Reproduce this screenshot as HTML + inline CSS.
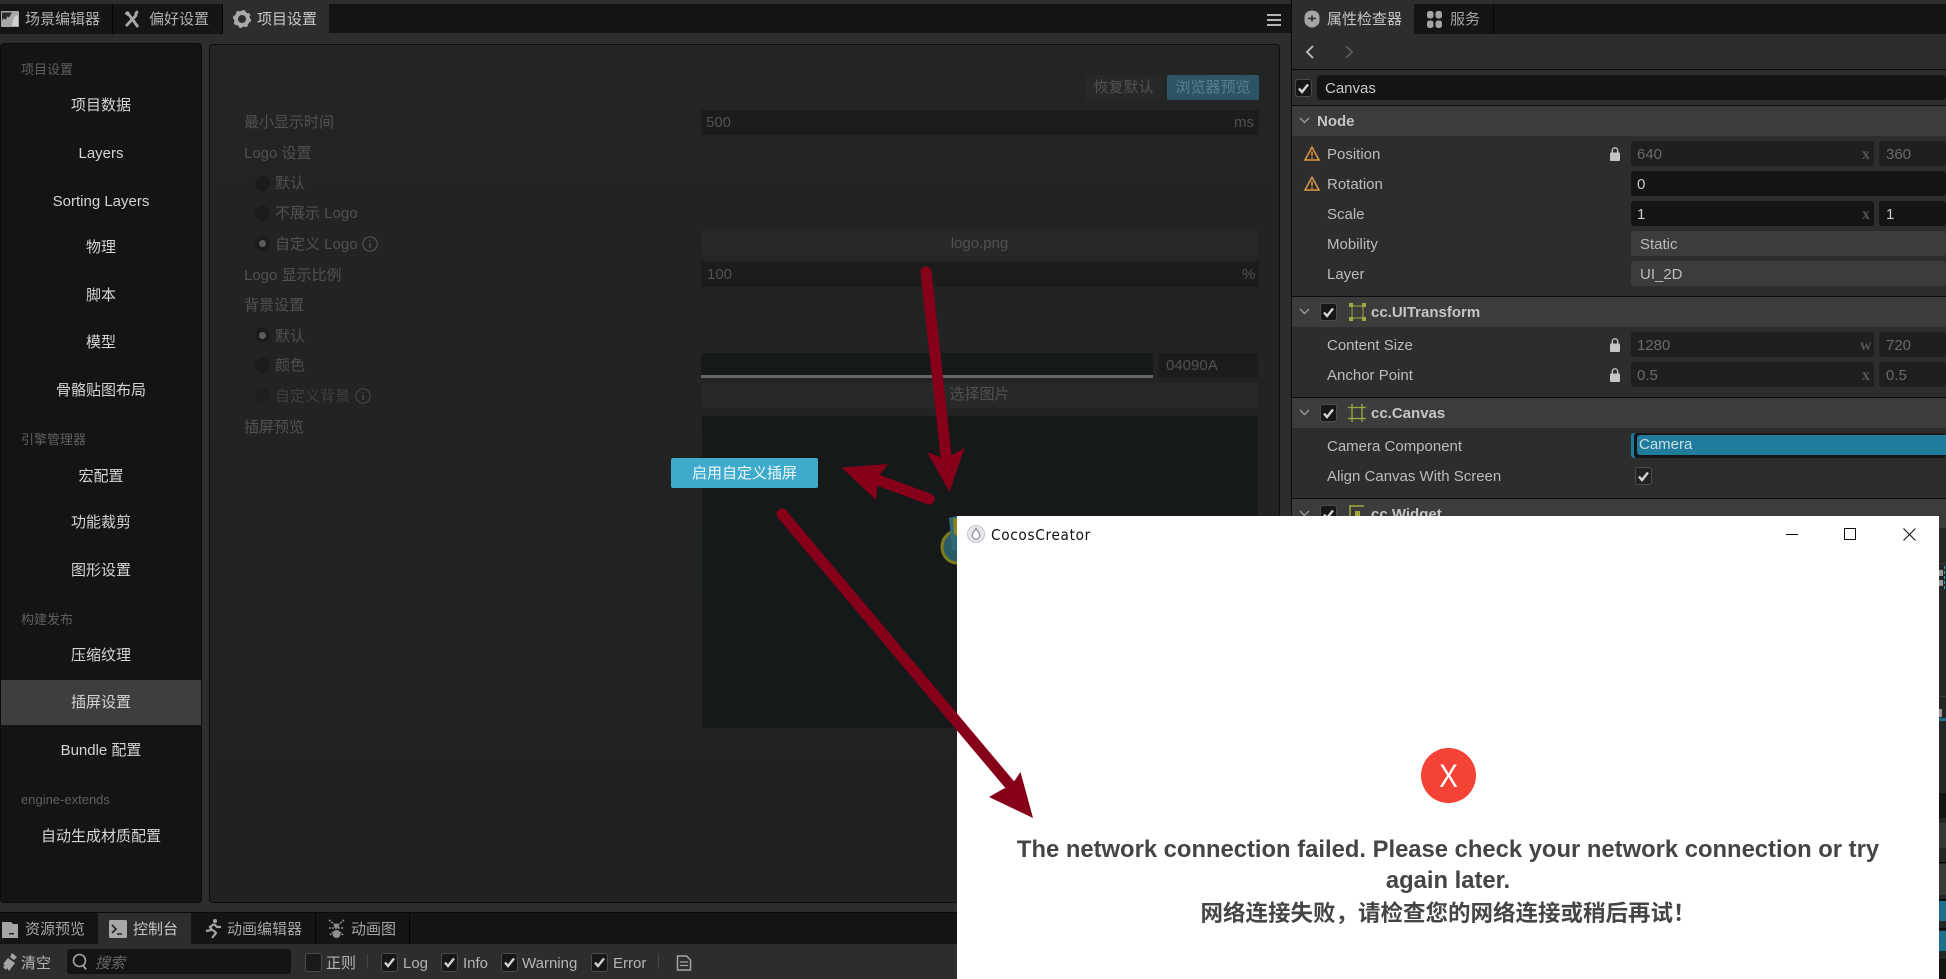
<!DOCTYPE html>
<html lang="zh"><head><meta charset="utf-8"><title>CocosCreator</title>
<style>
html,body{margin:0;padding:0;background:#2d2d2d}
body{position:relative;width:1946px;height:979px;overflow:hidden;font-family:"Liberation Sans","Noto Sans CJK SC",sans-serif;font-size:15px;color:#bdbdbd}
.b{position:absolute}
.t{position:absolute;white-space:nowrap;height:20px;line-height:20px;margin-top:1px}
.c{text-align:center}
.m{color:#d4d4d4;left:1px;width:200px;text-align:center}
.h{color:#5f5f5f;left:21px;font-size:13px}
.d{color:#505151}
.r{position:absolute;left:255px;width:15px;height:15px;border-radius:50%;background:#1a1b1b}
.r i{position:absolute;left:4px;top:4px;width:7px;height:7px;border-radius:50%;background:#5c5c5c}
.i1{background:#1f1f1f;border-radius:3px;position:absolute;height:25px}
.i2{background:#141414;border-radius:3px;position:absolute;height:25px}
.i3{background:#3c3c3c;border-radius:3px;position:absolute;height:25px}
.hd{position:absolute;left:1292px;width:654px;height:30px;background:#3c3c3c}
.ln{position:absolute;left:1292px;width:654px;height:1px;background:#0c0c0c}
.cb{position:absolute;width:15px;height:16px;border:1px solid #4a4a4a;border-radius:3px;background:#161616}
.cb svg{position:absolute;left:1px;top:1.5px;width:13px;height:13px}
.x{position:absolute;font-family:"Liberation Serif",serif;font-weight:bold;color:#555;font-size:16px;left:1862px;height:20px;line-height:20px;margin-top:1px}
.l{color:#bcbcbc;left:1327px}
.dim{color:#6a6a6a}
.en{color:#c8c8c8}
svg{position:absolute;overflow:visible}
</style></head><body>

<!-- top tab bar -->
<div class="b" style="left:0;top:4px;width:1291px;height:29px;background:#141414"></div>
<div class="b" style="left:0;top:4px;width:112px;height:30px;background:#151515;border-right:1px solid #050505"></div>
<div class="b" style="left:113px;top:4px;width:109px;height:30px;background:#151515;border-right:1px solid #050505"></div>
<div class="b" style="left:223px;top:4px;width:106px;height:30px;background:#2d2d2d"></div>
<svg style="left:1px;top:11px" width="18" height="16" viewBox="0 0 18 16"><rect width="18" height="16" rx="1" fill="#a8a8a8"/><path d="M1 1.500h10l-3 5-2-1-1 3-3-1-1 3z" fill="#2a2a2a"/><path d="M11 15l1-6 3-5 2 1v10z" fill="#d0d0d0"/></svg>
<div class="t" style="left:25px;top:9px;color:#b0b0b0">场景编辑器</div>
<svg style="left:124px;top:10px" width="18" height="19" viewBox="0 0 18 19"><path d="M3 2l11 15M14 1.500c-2 1-2.500 2.500-2 4L2 16" fill="none" stroke="#a9a9a9" stroke-width="2.800"/><path d="M.500 3.500L3 1l3 2.500-2.500 2.500z" fill="#a9a9a9"/></svg>
<div class="t" style="left:149px;top:9px;color:#b0b0b0">偏好设置</div>
<svg style="left:233px;top:10px" width="18" height="18" viewBox="0 0 18 18"><circle cx="9" cy="9" r="6" fill="none" stroke="#a9a9a9" stroke-width="4"/><circle cx="9" cy="9" r="8" fill="none" stroke="#a9a9a9" stroke-width="2.200" stroke-dasharray="3 3.280"/></svg>
<div class="t" style="left:257px;top:9px;color:#c9c9c9">项目设置</div>
<div class="b" style="left:1267px;top:14px;width:14px;height:2px;background:#b5b5b5;box-shadow:0 5px 0 #b5b5b5,0 10px 0 #b5b5b5"></div>

<!-- left menu -->
<div class="b" style="left:1px;top:44px;width:200px;height:858px;background:#141414;border-radius:3px;box-shadow:0 0 0 1px #0c0c0c"></div>
<div class="b" style="left:1px;top:680px;width:200px;height:45px;background:#3e3e3e"></div>
<div class="t h" style="top:59px">项目设置</div>
<div class="t m" style="top:95px">项目数据</div>
<div class="t m" style="top:143px">Layers</div>
<div class="t m" style="top:191px">Sorting Layers</div>
<div class="t m" style="top:237px">物理</div>
<div class="t m" style="top:285px">脚本</div>
<div class="t m" style="top:332px">模型</div>
<div class="t m" style="top:380px">骨骼贴图布局</div>
<div class="t h" style="top:429px">引擎管理器</div>
<div class="t m" style="top:466px">宏配置</div>
<div class="t m" style="top:512px">功能裁剪</div>
<div class="t m" style="top:560px">图形设置</div>
<div class="t h" style="top:609px">构建发布</div>
<div class="t m" style="top:645px">压缩纹理</div>
<div class="t m" style="top:692px">插屏设置</div>
<div class="t m" style="top:740px">Bundle 配置</div>
<div class="t h" style="top:789px">engine-extends</div>
<div class="t m" style="top:826px">自动生成材质配置</div>

<!-- main panel -->
<div class="b" style="left:210px;top:45px;width:1069px;height:857px;background:linear-gradient(#232424,#202120);border-radius:3px;box-shadow:0 0 0 1px #0c0c0c"></div>
<div class="b" style="left:1085px;top:75px;width:77px;height:25px;background:#272828;border-radius:2px"></div>
<div class="t c d" style="left:1085px;top:77px;width:77px">恢复默认</div>
<div class="b" style="left:1167px;top:75px;width:92px;height:25px;background:#2c5464;border-radius:2px"></div>
<div class="t c" style="left:1167px;top:77px;width:92px;color:#557f8f">浏览器预览</div>
<div class="t d" style="left:244px;top:112px">最小显示时间</div>
<div class="b" style="left:701px;top:110px;width:558px;height:25px;background:#1b1c1c;border-radius:2px"></div>
<div class="t d" style="left:706px;top:112px">500</div>
<div class="t d" style="left:1234px;top:112px">ms</div>
<div class="t d" style="left:244px;top:143px">Logo 设置</div>
<div class="r" style="top:176px"></div><div class="t d" style="left:275px;top:173px">默认</div>
<div class="r" style="top:206px"></div><div class="t d" style="left:275px;top:203px">不展示 Logo</div>
<div class="r" style="top:236px"><i></i></div><div class="t d" style="left:275px;top:234px">自定义 Logo</div>
<svg style="left:362px;top:236px" width="16" height="16" viewBox="0 0 16 16"><circle cx="8" cy="8" r="7.200" fill="none" stroke="#505151" stroke-width="1.200"/><path d="M8 7v5M8 4v1.500" stroke="#505151" stroke-width="1.500"/></svg>
<div class="t d" style="left:244px;top:265px">Logo 显示比例</div>
<div class="b" style="left:701px;top:231px;width:557px;height:25px;background:#272828;border-radius:2px"></div>
<div class="t c d" style="left:701px;top:233px;width:557px">logo.png</div>
<div class="b" style="left:701px;top:262px;width:558px;height:25px;background:#1b1c1c;border-radius:2px"></div>
<div class="t d" style="left:707px;top:264px">100</div>
<div class="t d" style="left:1242px;top:264px">%</div>
<div class="t d" style="left:244px;top:295px">背景设置</div>
<div class="r" style="top:328px"><i></i></div><div class="t d" style="left:275px;top:326px">默认</div>
<div class="r" style="top:358px"></div><div class="t d" style="left:275px;top:355px">颜色</div>
<div class="r" style="top:388px;background:#1e1f1f"></div><div class="t" style="left:275px;top:386px;color:#3e3f3f">自定义背景</div>
<svg style="left:355px;top:388px" width="16" height="16" viewBox="0 0 16 16"><circle cx="8" cy="8" r="7.200" fill="none" stroke="#454646" stroke-width="1.200"/><path d="M8 7v5M8 4v1.500" stroke="#454646" stroke-width="1.500"/></svg>
<div class="t d" style="left:244px;top:417px">插屏预览</div>
<div class="b" style="left:701px;top:353px;width:452px;height:22px;background:#15191a;border-radius:2px 2px 0 0"></div>
<div class="b" style="left:701px;top:375px;width:452px;height:3px;background:#666"></div>
<div class="b" style="left:1158px;top:353px;width:100px;height:25px;background:#1b1c1c;border-radius:2px"></div>
<div class="t d" style="left:1166px;top:355px">04090A</div>
<div class="b" style="left:701px;top:383px;width:557px;height:25px;background:#272828;border-radius:2px"></div>
<div class="t c d" style="left:701px;top:384px;width:557px">选择图片</div>
<div class="b" style="left:702px;top:416px;width:556px;height:312px;background:#15191a"></div>
<svg style="left:930px;top:505px" width="40" height="70" viewBox="0 0 40 70"><ellipse cx="27" cy="42" rx="15" ry="16" fill="#2a5c66" stroke="#7d7a1f" stroke-width="3"/><path d="M19 13l8-2 8 3v32H22z" fill="#2f6a76"/><path d="M23 14l4-1v18l-3-2z" fill="#8c8422"/></svg>
<div class="b" style="left:671px;top:458px;width:147px;height:30px;background:#3fabcc;border-radius:2px"></div>
<div class="t c" style="left:671px;top:463px;width:147px;color:#ecf6f9">启用自定义插屏</div>

<!-- bottom tabs -->
<div class="b" style="left:0;top:912px;width:1291px;height:1px;background:#0a0a0a"></div>
<div class="b" style="left:0;top:913px;width:1291px;height:31px;background:#141414"></div>
<div class="b" style="left:98px;top:913px;width:93px;height:31px;background:#2d2d2d"></div>
<div class="b" style="left:315px;top:913px;width:1px;height:31px;background:#050505"></div>
<div class="b" style="left:409px;top:913px;width:1px;height:31px;background:#050505"></div>
<svg style="left:2px;top:921px" width="17" height="17" viewBox="0 0 17 17"><path d="M0 1h9l2 2h5v14H0z" fill="#a5a5a5"/><rect x="7" y="12" width="5" height="1.500" fill="#222"/></svg>
<div class="t" style="left:25px;top:919px;color:#a5a5a5">资源预览</div>
<svg style="left:109px;top:920px" width="18" height="18" viewBox="0 0 18 18"><rect width="18" height="18" rx="1.500" fill="#a8a8a8"/><path d="M3 5l4 4-4 4M8 14h5" fill="none" stroke="#222" stroke-width="1.600"/></svg>
<div class="t" style="left:133px;top:919px;color:#c5c5c5">控制台</div>
<svg style="left:203px;top:918px" width="20" height="22" viewBox="0 0 20 22"><circle cx="12" cy="3" r="2" fill="#a5a5a5"/><path d="M11 6L7 9l2 3-6 1M11 6l3 3h4M10 12l3 3-4 5" fill="none" stroke="#a5a5a5" stroke-width="2.200"/></svg>
<div class="t" style="left:227px;top:919px;color:#a5a5a5">动画编辑器</div>
<svg style="left:327px;top:918px" width="19" height="22" viewBox="0 0 19 22"><circle cx="9.500" cy="16" r="4" fill="#8f8f8f"/><circle cx="9.500" cy="8" r="2.500" fill="#8f8f8f"/><path d="M2 2l6 5M17 2l-6 5M2 10h15M3 17l3-3M16 17l-3-3" stroke="#8f8f8f" stroke-width="1.500" stroke-dasharray="2 1"/></svg>
<div class="t" style="left:351px;top:919px;color:#a5a5a5">动画图</div>

<!-- console toolbar -->
<svg style="left:3px;top:953px" width="16" height="19" viewBox="0 0 16 19"><path d="M9 0l5 4-3 3-4-3zM5 5l7 5-6 8-2-3-1 2-3-3 2-2-2-1z" fill="#a5a5a5"/></svg>
<div class="t" style="left:21px;top:953px;color:#b5b5b5">清空</div>
<div class="b" style="left:67px;top:949px;width:224px;height:25px;background:#141414;border-radius:3px"></div>
<svg style="left:72px;top:953px" width="16" height="18" viewBox="0 0 16 18"><circle cx="7.500" cy="7.500" r="6" fill="none" stroke="#a5a5a5" stroke-width="1.600"/><path d="M11 12l3 4.500" stroke="#a5a5a5" stroke-width="1.800"/></svg>
<div class="t" style="left:95px;top:953px;color:#666;font-style:italic">搜索</div>
<div class="cb" style="left:305px;top:953px;width:15px;height:17px;background:#1a1a1a"></div>
<div class="t" style="left:326px;top:953px;color:#b5b5b5">正则</div>
<div class="b" style="left:367px;top:954px;width:1px;height:15px;background:#444"></div>
<div class="cb" style="left:381px;top:953px;height:17px"><svg viewBox="0 0 13 13" style="top:2px"><path d="M2 6.500l3 3.500 6-7.500" fill="none" stroke="#d0d0d0" stroke-width="2.400"/></svg></div>
<div class="t" style="left:403px;top:953px;color:#b5b5b5">Log</div>
<div class="cb" style="left:441px;top:953px;height:17px"><svg viewBox="0 0 13 13" style="top:2px"><path d="M2 6.500l3 3.500 6-7.500" fill="none" stroke="#d0d0d0" stroke-width="2.400"/></svg></div>
<div class="t" style="left:463px;top:953px;color:#b5b5b5">Info</div>
<div class="cb" style="left:501px;top:953px;height:17px"><svg viewBox="0 0 13 13" style="top:2px"><path d="M2 6.500l3 3.500 6-7.500" fill="none" stroke="#d0d0d0" stroke-width="2.400"/></svg></div>
<div class="t" style="left:522px;top:953px;color:#b5b5b5">Warning</div>
<div class="cb" style="left:591px;top:953px;height:17px"><svg viewBox="0 0 13 13" style="top:2px"><path d="M2 6.500l3 3.500 6-7.500" fill="none" stroke="#d0d0d0" stroke-width="2.400"/></svg></div>
<div class="t" style="left:613px;top:953px;color:#b5b5b5">Error</div>
<div class="b" style="left:658px;top:954px;width:1px;height:15px;background:#444"></div>
<svg style="left:676px;top:955px" width="16" height="16" viewBox="0 0 16 16"><path d="M1.500 1h9l4 4v10h-13z" fill="none" stroke="#a5a5a5" stroke-width="1.500"/><path d="M4 7h8M4 10.500h8" stroke="#a5a5a5" stroke-width="1.300"/></svg>

<!-- inspector -->
<div class="b" style="left:1291px;top:0;width:1px;height:979px;background:#0c0c0c"></div>
<div class="b" style="left:1292px;top:0;width:654px;height:979px;background:#2d2d2d"></div>
<div class="b" style="left:1292px;top:4px;width:654px;height:30px;background:#141414"></div>
<div class="b" style="left:1292px;top:4px;width:122px;height:30px;background:#2d2d2d"></div>
<div class="b" style="left:1493px;top:4px;width:1px;height:30px;background:#050505"></div>
<svg style="left:1304px;top:10px" width="16" height="18" viewBox="0 0 16 18"><path d="M8 .500C12 .500 15.500 3 15.500 7.500V11c0 3-3 6-7.500 6.500C3.500 17 .500 14 .500 11V7.500C.500 3 4 .500 8 .500z" fill="#a5a5a5"/><path d="M4 8.500h8M8 5.500v6" stroke="#2d2d2d" stroke-width="1.600"/></svg>
<div class="t" style="left:1327px;top:9px;color:#c5c5c5">属性检查器</div>
<svg style="left:1427px;top:11px" width="15" height="17" viewBox="0 0 15 17"><rect x="0" y="0" width="6.500" height="7.500" rx="2.500" fill="#a5a5a5"/><rect x="8.500" y="0" width="6.500" height="7.500" rx="2.500" fill="#a5a5a5"/><rect x="0" y="9.500" width="6.500" height="7.500" rx="2.500" fill="#a5a5a5"/><rect x="8.500" y="9.500" width="6.500" height="7.500" rx="2.500" fill="#a5a5a5"/></svg>
<div class="t" style="left:1450px;top:9px;color:#a5a5a5">服务</div>
<svg style="left:1305px;top:45px" width="10" height="14" viewBox="0 0 10 14"><path d="M8 1L2 7l6 6" fill="none" stroke="#c0c0c0" stroke-width="1.800"/></svg>
<svg style="left:1344px;top:45px" width="10" height="14" viewBox="0 0 10 14"><path d="M2 1l6 6-6 6" fill="none" stroke="#5c5c5c" stroke-width="1.800"/></svg>
<div class="ln" style="top:69px"></div>
<div class="cb" style="left:1295px;top:79px"><svg viewBox="0 0 13 13"><path d="M2 6.500l3 3.500 6-7.500" fill="none" stroke="#d5d5d5" stroke-width="2.400"/></svg></div>
<div class="i2" style="left:1317px;top:75px;width:629px"></div>
<div class="t en" style="left:1325px;top:78px">Canvas</div>
<div class="ln" style="top:105px"></div>

<div class="hd" style="top:106px"></div>
<svg style="left:1299px;top:117px" width="11" height="7" viewBox="0 0 11 7"><path d="M1 1l4.500 4.500L10 1" fill="none" stroke="#9a9a9a" stroke-width="1.400"/></svg>
<div class="t" style="left:1317px;top:111px;font-weight:bold;color:#c5c5c5">Node</div>
<svg style="left:1304px;top:146px" width="16" height="15" viewBox="0 0 16 15"><path d="M8 1.200L15 14H1zM8 5.500v4.500M8 11v1.500" fill="none" stroke="#e09b45" stroke-width="1.500"/></svg>
<div class="t l" style="top:144px">Position</div>
<svg style="left:1610px;top:147px" width="10" height="14" viewBox="0 0 10 14"><rect y="5.500" width="10" height="8.500" rx="1" fill="#c5c5c5"/><path d="M2.300 6V3.500a2.700 2.700 0 0 1 5.400 0V6" fill="none" stroke="#c5c5c5" stroke-width="1.400"/></svg>
<div class="i1" style="left:1631px;top:141px;width:243px"></div><div class="t dim" style="left:1637px;top:144px">640</div><div class="x" style="top:144px">x</div>
<div class="i1" style="left:1879px;top:141px;width:67px"></div><div class="t dim" style="left:1886px;top:144px">360</div>
<svg style="left:1304px;top:176px" width="16" height="15" viewBox="0 0 16 15"><path d="M8 1.200L15 14H1zM8 5.500v4.500M8 11v1.500" fill="none" stroke="#e09b45" stroke-width="1.500"/></svg>
<div class="t l" style="top:174px">Rotation</div>
<div class="i2" style="left:1631px;top:171px;width:315px"></div><div class="t en" style="left:1637px;top:174px">0</div>
<div class="t l" style="top:204px">Scale</div>
<div class="i2" style="left:1631px;top:201px;width:243px"></div><div class="t en" style="left:1637px;top:204px">1</div><div class="x" style="top:204px">x</div>
<div class="i2" style="left:1879px;top:201px;width:67px"></div><div class="t en" style="left:1886px;top:204px">1</div>
<div class="t l" style="top:234px">Mobility</div>
<div class="i3" style="left:1631px;top:231px;width:315px"></div><div class="t" style="left:1640px;top:234px;color:#bcbcbc">Static</div>
<div class="t l" style="top:264px">Layer</div>
<div class="i3" style="left:1631px;top:261px;width:315px"></div><div class="t" style="left:1640px;top:264px;color:#bcbcbc">UI_2D</div>
<div class="ln" style="top:296px"></div>

<div class="hd" style="top:297px"></div>
<svg style="left:1299px;top:308px" width="11" height="7" viewBox="0 0 11 7"><path d="M1 1l4.500 4.500L10 1" fill="none" stroke="#9a9a9a" stroke-width="1.400"/></svg>
<div class="cb" style="left:1320px;top:303px"><svg viewBox="0 0 13 13"><path d="M2 6.500l3 3.500 6-7.500" fill="none" stroke="#d5d5d5" stroke-width="2.400"/></svg></div>
<svg style="left:1349px;top:303px" width="17" height="18" viewBox="0 0 17 18"><path d="M3 3h11v12H3z" fill="none" stroke="#a0a83c" stroke-width="1"/><path d="M0 0h4v4H0zM13 0h4v4h-4zM0 14h4v4H0zM13 14h4v4h-4z" fill="#a0a83c"/></svg>
<div class="t" style="left:1371px;top:302px;font-weight:bold;color:#c5c5c5">cc.UITransform</div>
<div class="t l" style="top:335px">Content Size</div>
<svg style="left:1610px;top:338px" width="10" height="14" viewBox="0 0 10 14"><rect y="5.500" width="10" height="8.500" rx="1" fill="#c5c5c5"/><path d="M2.300 6V3.500a2.700 2.700 0 0 1 5.400 0V6" fill="none" stroke="#c5c5c5" stroke-width="1.400"/></svg>
<div class="i1" style="left:1631px;top:332px;width:243px"></div><div class="t dim" style="left:1637px;top:335px">1280</div><div class="x" style="top:335px;left:1860px">w</div>
<div class="i1" style="left:1879px;top:332px;width:67px"></div><div class="t dim" style="left:1886px;top:335px">720</div>
<div class="t l" style="top:365px">Anchor Point</div>
<svg style="left:1610px;top:368px" width="10" height="14" viewBox="0 0 10 14"><rect y="5.500" width="10" height="8.500" rx="1" fill="#c5c5c5"/><path d="M2.300 6V3.500a2.700 2.700 0 0 1 5.400 0V6" fill="none" stroke="#c5c5c5" stroke-width="1.400"/></svg>
<div class="i1" style="left:1631px;top:362px;width:243px"></div><div class="t dim" style="left:1637px;top:365px">0.5</div><div class="x" style="top:365px">x</div>
<div class="i1" style="left:1879px;top:362px;width:67px"></div><div class="t dim" style="left:1886px;top:365px">0.5</div>
<div class="ln" style="top:397px"></div>

<div class="hd" style="top:398px"></div>
<svg style="left:1299px;top:409px" width="11" height="7" viewBox="0 0 11 7"><path d="M1 1l4.500 4.500L10 1" fill="none" stroke="#9a9a9a" stroke-width="1.400"/></svg>
<div class="cb" style="left:1320px;top:404px"><svg viewBox="0 0 13 13"><path d="M2 6.500l3 3.500 6-7.500" fill="none" stroke="#d5d5d5" stroke-width="2.400"/></svg></div>
<svg style="left:1348px;top:404px" width="18" height="18" viewBox="0 0 18 18"><path d="M4 0v18M14 0v18M0 3.500h18M0 14.500h18" fill="none" stroke="#a0a83c" stroke-width="1.300"/></svg>
<div class="t" style="left:1371px;top:403px;font-weight:bold;color:#c5c5c5">cc.Canvas</div>
<div class="t l" style="top:436px">Camera Component</div>
<div class="b" style="left:1631px;top:433px;width:315px;height:25px;background:#141414;border-radius:3px;box-shadow:inset 3px 0 0 #207c9c"></div>
<div class="b" style="left:1637px;top:435px;width:309px;height:20px;background:#207c9c;border-radius:3px 0 0 3px"></div>
<div class="t" style="left:1639px;top:434px;color:#c9dde4">Camera</div>
<div class="t l" style="top:466px">Align Canvas With Screen</div>
<div class="cb" style="left:1635px;top:467px;background:#222"><svg viewBox="0 0 13 13"><path d="M2 6.500l3 3.500 6-7.500" fill="none" stroke="#d5d5d5" stroke-width="2.400"/></svg></div>
<div class="ln" style="top:498px"></div>

<div class="hd" style="top:499px"></div>
<svg style="left:1299px;top:510px" width="11" height="7" viewBox="0 0 11 7"><path d="M1 1l4.500 4.500L10 1" fill="none" stroke="#9a9a9a" stroke-width="1.400"/></svg>
<div class="cb" style="left:1320px;top:505px"><svg viewBox="0 0 13 13"><path d="M2 6.500l3 3.500 6-7.500" fill="none" stroke="#d5d5d5" stroke-width="2.400"/></svg></div>
<svg style="left:1349px;top:505px" width="16" height="16" viewBox="0 0 16 16"><path d="M1 0v16M1 1h14" stroke="#a0a83c" stroke-width="1.500"/><rect x="6" y="6" width="5" height="5" fill="#a0a83c"/></svg>
<div class="t" style="left:1371px;top:504px;font-weight:bold;color:#c5c5c5">cc.Widget</div>

<!-- right edge remnants -->
<div class="b" style="left:1939px;top:528px;width:7px;height:451px;background:#262626"></div>
<div class="b" style="left:1939px;top:563px;width:7px;height:1px;background:#3a3a3a"></div>
<div class="b" style="left:1939px;top:570px;width:4px;height:6px;background:#9a9a9a"></div>
<div class="b" style="left:1939px;top:580px;width:4px;height:6px;background:#9a9a9a"></div>
<div class="b" style="left:1944px;top:566px;width:1px;height:24px;background:repeating-linear-gradient(#2aa3c9 0 3px,transparent 3px 5px)"></div>
<div class="b" style="left:1939px;top:696px;width:7px;height:1px;background:#3a3a3a"></div>
<div class="b" style="left:1939px;top:709px;width:3px;height:8px;background:#9a9a9a"></div>
<div class="b" style="left:1939px;top:718px;width:7px;height:3px;background:#1f6f8b"></div>
<div class="b" style="left:1939px;top:793px;width:7px;height:25px;background:#141414"></div>
<div class="b" style="left:1939px;top:823px;width:7px;height:25px;background:#383838"></div>
<div class="b" style="left:1939px;top:862px;width:7px;height:1px;background:#000"></div>
<div class="b" style="left:1939px;top:864px;width:7px;height:31px;background:#3a3a3a"></div>
<div class="b" style="left:1939px;top:899px;width:7px;height:2px;background:#0c0c0c"></div>
<div class="b" style="left:1939px;top:901px;width:7px;height:20px;background:#1f6f8b"></div>
<div class="b" style="left:1939px;top:928px;width:7px;height:2px;background:#0c0c0c"></div>
<div class="b" style="left:1939px;top:931px;width:7px;height:20px;background:#1f6f8b"></div>
<div class="b" style="left:1939px;top:959px;width:7px;height:20px;background:#141414"></div>

<!-- dialog -->
<div class="b" style="left:957px;top:516px;width:982px;height:463px;background:#fff"></div>
<svg style="left:967px;top:525px" width="18" height="18" viewBox="0 0 18 18"><circle cx="9" cy="9" r="8.500" fill="#e9e9ec" stroke="#c5c6cc"/><path d="M9 3.500c2 3 3.800 4.800 3.800 7a3.800 3.800 0 0 1-7.600 0c0-2.200 1.800-4 3.800-7z" fill="#fff" stroke="#8e919b" stroke-width="1.300"/></svg>
<div class="t" style="left:991px;top:524px;color:#111;font-size:15px;letter-spacing:.75px;font-family:'DejaVu Sans','Liberation Sans',sans-serif;transform-origin:left;transform:scaleX(.91)">CocosCreator</div>
<svg style="left:1786px;top:528px" width="130" height="13" viewBox="0 0 130 13"><path d="M0 6.500h12" stroke="#111" stroke-width="1"/><rect x="58.500" y=".500" width="11" height="11" fill="none" stroke="#111" stroke-width="1"/><path d="M117.500 .500l12 12M129.500 .500l-12 12" stroke="#111" stroke-width="1"/></svg>
<div class="b" style="left:1421px;top:748px;width:55px;height:55px;border-radius:50%;background:#f44336"></div>
<div class="t c" style="left:1421px;top:759px;width:55px;height:32px;line-height:32px;font-size:32px;color:#fff;transform:scaleX(.88)">X</div>
<div class="t c" style="left:957px;top:833px;width:982px;height:32px;line-height:32px;font-size:23.800px;font-weight:bold;color:#454545">The network connection failed. Please check your network connection or try</div>
<div class="t c" style="left:957px;top:864px;width:982px;height:32px;line-height:32px;font-size:23.800px;font-weight:bold;color:#454545">again later.</div>
<div class="t c" style="left:957px;top:897px;width:982px;height:32px;line-height:32px;font-size:22.500px;font-weight:bold;color:#454545">网络连接失败，请检查您的网络连接或稍后再试！</div>

<!-- arrows -->
<svg style="left:0;top:0" width="1946" height="979" viewBox="0 0 1946 979">
<g stroke="#870019" stroke-width="11" stroke-linecap="round" fill="none">
<path d="M926 272L946 455"/>
<path d="M929 499L875 479"/>
<path d="M782 514L1010 785"/>
</g>
<g fill="#870019">
<path d="M927 452L949.500 492 964.500 448 952 455 940 457z"/>
<path d="M841.500 467.500L888 464 878 477 876 500z"/>
<path d="M1033 818L1020.500 772 1011 786 1003 789 989 797z"/>
</g>
</svg>
</body></html>
